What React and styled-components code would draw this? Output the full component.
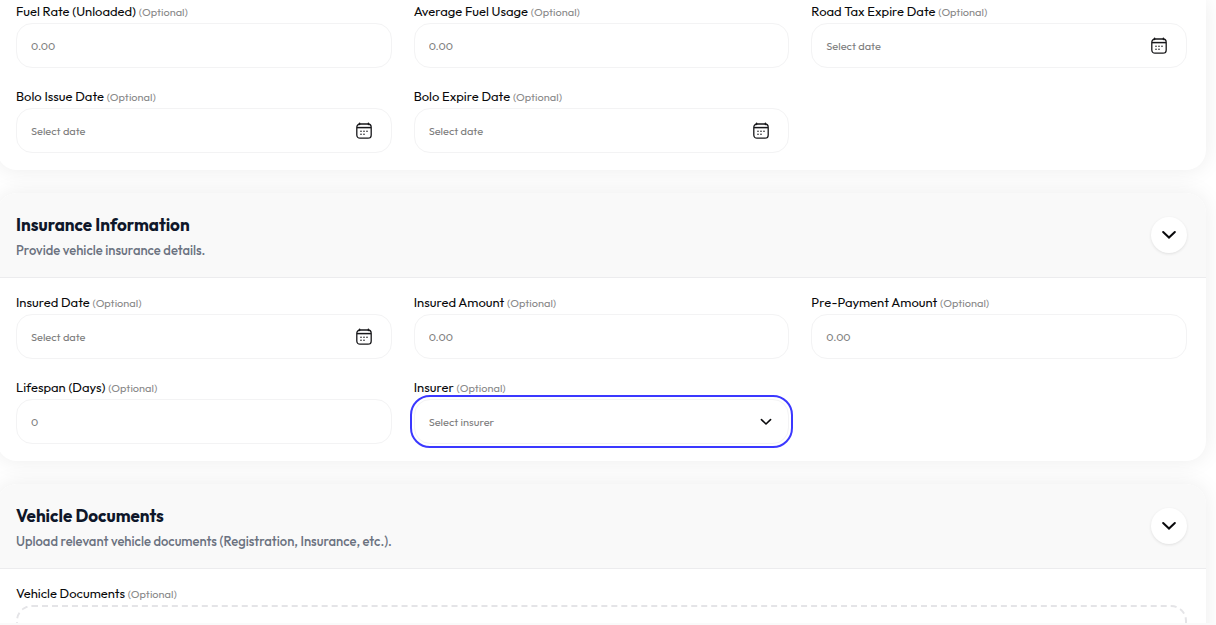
import React, { useState } from 'react';
import styled, { createGlobalStyle, css } from 'styled-components';

const CalendarIcon = () => (
  <svg width="18" height="18" viewBox="0 0 18 18" fill="none" aria-hidden="true">
    <rect x="1.8" y="2" width="14.4" height="14.2" rx="3.2" stroke="#18181b" strokeWidth="1.3" />
    <path d="M2 5.6h14" stroke="#18181b" strokeWidth="1.5" />
    <path d="M4.6 1.2v1.4M13.4 1.2v1.4" stroke="#18181b" strokeWidth="1.5" strokeLinecap="round" />
    <path
      d="M6 9.3h.01M9 9.3h.01M12 9.3h.01M6 12.3h.01M9 12.3h.01"
      stroke="#18181b"
      strokeWidth="1.6"
      strokeLinecap="round"
    />
  </svg>
);

const ChevronIcon = ({ size }) => (
  <svg width={size} height={size} viewBox="0 0 16 16" fill="none" aria-hidden="true">
    <path d="M2.8 5.3 8 10.3l5.2-5" stroke="#09090b" strokeWidth="1.8" strokeLinecap="round" />
  </svg>
);

const Field = ({ id, label, placeholder, type }) => (
  <FieldBox>
    <Label htmlFor={id}>
      {label} <Optional>(Optional)</Optional>
    </Label>
    <Control>
      {type === 'select' ? (
        <Select id={id} defaultValue="" $active>
          <option value="">{placeholder}</option>
        </Select>
      ) : (
        <Input id={id} type="text" placeholder={placeholder} />
      )}
      {type === 'date' && (
        <PickerButton type="button" aria-label={label}>
          <CalendarIcon />
        </PickerButton>
      )}
      {type === 'select' && (
        <SelectArrow>
          <ChevronIcon size={14} />
        </SelectArrow>
      )}
    </Control>
  </FieldBox>
);

const Section = ({ title, description, children }) => {
  const [open, setOpen] = useState(true);

  return (
    <Card>
      <CardHeader>
        <HeaderText>
          <Title>{title}</Title>
          <Description>{description}</Description>
        </HeaderText>
        <ToggleButton type="button" aria-label={title} aria-expanded={open} onClick={() => setOpen(!open)}>
          <ChevronIcon size={18} />
        </ToggleButton>
      </CardHeader>
      {open && <CardBody>{children}</CardBody>}
    </Card>
  );
};

const vehicleFields = [
  { id: 'fuelRate', label: 'Fuel Rate (Unloaded)', placeholder: '0.00' },
  { id: 'fuelUsage', label: 'Average Fuel Usage', placeholder: '0.00' },
  { id: 'roadTax', label: 'Road Tax Expire Date', placeholder: 'Select date', type: 'date' },
  { id: 'boloIssue', label: 'Bolo Issue Date', placeholder: 'Select date', type: 'date' },
  { id: 'boloExpire', label: 'Bolo Expire Date', placeholder: 'Select date', type: 'date' },
];

const insuranceFields = [
  { id: 'insuredDate', label: 'Insured Date', placeholder: 'Select date', type: 'date' },
  { id: 'insuredAmount', label: 'Insured Amount', placeholder: '0.00' },
  { id: 'prePayment', label: 'Pre-Payment Amount', placeholder: '0.00' },
  { id: 'lifespan', label: 'Lifespan (Days)', placeholder: '0' },
  { id: 'insurer', label: 'Insurer', placeholder: 'Select insurer', type: 'select' },
];

const App = () => {
  return (
    <Screen>
      <GlobalStyle />
      <Form>
        <Card $continued>
          <CardBody $continued>
            <FieldGrid>
              {vehicleFields.map(field => (
                <Field key={field.id} {...field} />
              ))}
            </FieldGrid>
          </CardBody>
        </Card>

        <Section title="Insurance Information" description="Provide vehicle insurance details.">
          <FieldGrid>
            {insuranceFields.map(field => (
              <Field key={field.id} {...field} />
            ))}
          </FieldGrid>
        </Section>

        <Section
          title="Vehicle Documents"
          description="Upload relevant vehicle documents (Registration, Insurance, etc.)."
        >
          <Label htmlFor="documents">
            Vehicle Documents <Optional>(Optional)</Optional>
          </Label>
          <DropZone>
            <FileInput id="documents" type="file" multiple />
          </DropZone>
        </Section>
      </Form>
    </Screen>
  );
};

const GlobalStyle = createGlobalStyle`
  * {
    box-sizing: border-box;
  }
  body {
    margin: 0;
    background: #fff;
    font-family: Outfit, Lato, 'Open Sans', sans-serif;
  }
  button, input, select {
    font-family: inherit;
  }
`;

const Screen = styled.div`
  height: 100vh;
  overflow: hidden;
  border-bottom: 2px solid #fafafa;
`;

const Form = styled.form`
  display: flex;
  flex-direction: column;
  gap: 23px;
  margin: 0 10px 0 -3px;
`;

const Card = styled.section`
  background: #fff;
  border-radius: ${({ $continued }) => ($continued ? '0 0 20px 20px' : '20px')};
  box-shadow: 0 0 22px rgba(0, 0, 0, 0.08);
`;

const CardHeader = styled.header`
  display: flex;
  align-items: center;
  justify-content: space-between;
  height: 85px;
  padding: 0 19px;
  background: #f9f9f9;
  border-bottom: 1px solid #ececee;
  border-radius: 20px 20px 0 0;
`;

const HeaderText = styled.div`
  padding-top: 4px;
`;

const Title = styled.h2`
  margin: 0;
  font-size: 17px;
  line-height: 26px;
  font-weight: 700;
  color: #0f172a;
`;

const Description = styled.p`
  margin: 0;
  font-size: 13px;
  line-height: 24px;
  font-weight: 500;
  color: #6b7280;
`;

const ToggleButton = styled.button`
  display: flex;
  align-items: center;
  justify-content: center;
  width: 36px;
  height: 36px;
  padding: 0;
  border: none;
  border-radius: 50%;
  background: #fff;
  box-shadow: 0 1px 3px rgba(0, 0, 0, 0.1);
  cursor: pointer;
`;

const CardBody = styled.div`
  padding: ${({ $continued }) => ($continued ? '3px' : '16px')} 19px 17px;
`;

const FieldGrid = styled.div`
  display: grid;
  grid-template-columns: repeat(3, 1fr);
  gap: 20px 22px;
`;

const FieldBox = styled.div`
  display: flex;
  flex-direction: column;
`;

const Label = styled.label`
  display: block;
  margin-bottom: 4px;
  font-size: 13px;
  line-height: 16px;
  color: #09090b;
`;

const Optional = styled.span`
  font-size: 11px;
  line-height: 1;
  color: #8a8a8a;
`;

const Control = styled.div`
  position: relative;
`;

const controlStyle = css`
  display: block;
  width: 100%;
  height: 45px;
  padding: 1px 14px 0;
  border: 1px solid #f3f3f4;
  border-radius: 16px;
  background: #fff;
  font-size: 11px;
`;

const Input = styled.input`
  ${controlStyle}
  color: #18181b;
  &::placeholder {
    color: #7d7d7d;
    opacity: 1;
  }
`;

const Select = styled.select`
  ${controlStyle}
  appearance: none;
  color: #7d7d7d;
  outline: ${({ $active }) => ($active ? '2px solid #3b38ff' : 'none')};
  outline-offset: 2px;
`;

const PickerButton = styled.button`
  position: absolute;
  top: 0;
  right: 19px;
  display: flex;
  align-items: center;
  height: 100%;
  padding: 0;
  border: none;
  background: none;
  cursor: pointer;
`;

const SelectArrow = styled.span`
  position: absolute;
  top: 0;
  right: 16px;
  display: flex;
  align-items: center;
  height: 100%;
  pointer-events: none;
`;

const DropZone = styled.div`
  height: 140px;
  border: 2px dashed #e4e4e7;
  border-radius: 16px;
`;

const FileInput = styled.input`
  width: 100%;
  height: 100%;
  opacity: 0;
`;

export default App;
